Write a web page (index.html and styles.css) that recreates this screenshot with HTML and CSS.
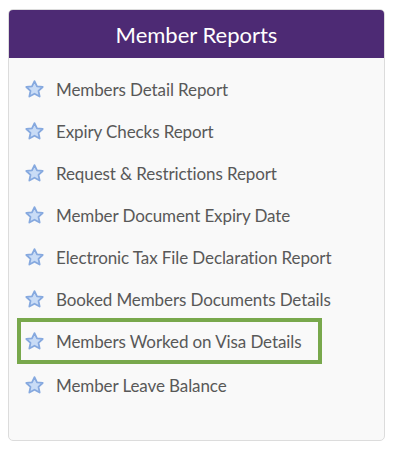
FILE: index.html
```html
<!DOCTYPE html>
<html>
<head>
<meta charset="utf-8">
<link rel="stylesheet" href="styles.css">
</head>
<body>
<div class="panel">
  <div class="panel-head">Member Reports</div>
  <ul class="report-list">
    <li class="report"><svg class="star" viewBox="0 0 20 20"><path d="M10 2l2.4 5 5.4.6-4 3.7 1.1 5.4L10 14l-4.9 2.7 1.1-5.4-4-3.7 5.4-.6z"/></svg><span>Members Detail Report</span></li>
    <li class="report"><svg class="star" viewBox="0 0 20 20"><path d="M10 2l2.4 5 5.4.6-4 3.7 1.1 5.4L10 14l-4.9 2.7 1.1-5.4-4-3.7 5.4-.6z"/></svg><span>Expiry Checks Report</span></li>
    <li class="report"><svg class="star" viewBox="0 0 20 20"><path d="M10 2l2.4 5 5.4.6-4 3.7 1.1 5.4L10 14l-4.9 2.7 1.1-5.4-4-3.7 5.4-.6z"/></svg><span>Request &amp; Restrictions Report</span></li>
    <li class="report"><svg class="star" viewBox="0 0 20 20"><path d="M10 2l2.4 5 5.4.6-4 3.7 1.1 5.4L10 14l-4.9 2.7 1.1-5.4-4-3.7 5.4-.6z"/></svg><span>Member Document Expiry Date</span></li>
    <li class="report"><svg class="star" viewBox="0 0 20 20"><path d="M10 2l2.4 5 5.4.6-4 3.7 1.1 5.4L10 14l-4.9 2.7 1.1-5.4-4-3.7 5.4-.6z"/></svg><span>Electronic Tax File Declaration Report</span></li>
    <li class="report"><svg class="star" viewBox="0 0 20 20"><path d="M10 2l2.4 5 5.4.6-4 3.7 1.1 5.4L10 14l-4.9 2.7 1.1-5.4-4-3.7 5.4-.6z"/></svg><span>Booked Members Documents Details</span></li>
    <li class="report highlighted"><svg class="star" viewBox="0 0 20 20"><path d="M10 2l2.4 5 5.4.6-4 3.7 1.1 5.4L10 14l-4.9 2.7 1.1-5.4-4-3.7 5.4-.6z"/></svg><span>Members Worked on Visa Details</span></li>
    <li class="report"><svg class="star" viewBox="0 0 20 20"><path d="M10 2l2.4 5 5.4.6-4 3.7 1.1 5.4L10 14l-4.9 2.7 1.1-5.4-4-3.7 5.4-.6z"/></svg><span>Member Leave Balance</span></li>
  </ul>
</div>
</body>
</html>
```
FILE: styles.css
```css
html, body {
  margin: 0;
  padding: 0;
  background: #ffffff;
}
body {
  padding: 9px 9px 0 8px;
  font-family: Lato, "Open Sans", sans-serif;
}
.panel {
  width: 377px;
  height: 432px;
  box-sizing: border-box;
  border: 1px solid #dcdcdc;
  border-radius: 5px;
  background: #f9f9f9;
  overflow: hidden;
}
.panel-head {
  height: 49px;
  margin: -1px -1px 0 -1px;
  background: #4d2a74;
  color: #ffffff;
  font-size: 22px;
  display: flex;
  align-items: center;
  justify-content: center;
  padding-top: 1px;
  box-sizing: border-box;
}
.report-list {
  list-style: none;
  margin: 0;
  padding: 10px 0 0 8px;
}
.report {
  display: flex;
  align-items: center;
  height: 42px;
  box-sizing: border-box;
  padding-left: 8px;
  color: #585858;
  font-size: 17px;
  white-space: nowrap;
  letter-spacing: -0.1px;
}
.star {
  width: 21px;
  height: 21px;
  margin-left: -1px;
  margin-right: 11px;
  flex: none;
}
.star path {
  fill: #c9dcf6;
  stroke: #86a9df;
  stroke-width: 1.7;
  stroke-linejoin: round;
}
.highlighted {
  width: 305px;
  border: 4px solid #78a84c;
  padding-left: 4px;
  height: 46px;
  margin: -2px 0 0 0;
}
```
